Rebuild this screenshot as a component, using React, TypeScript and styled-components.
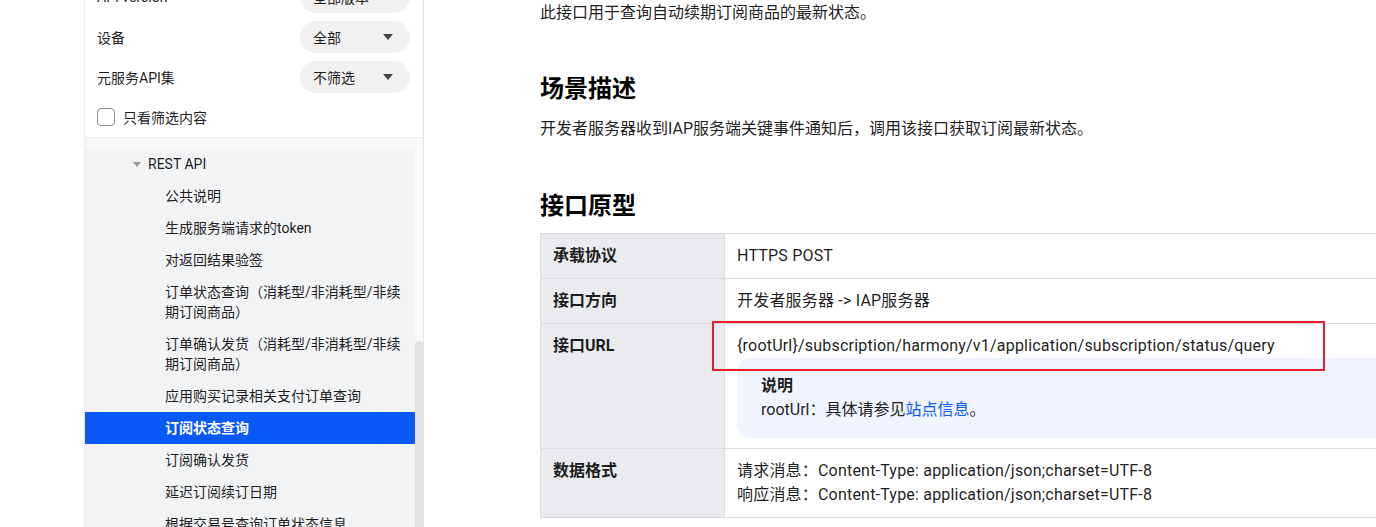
import React, { FC } from "react";
import styled, { createGlobalStyle } from "styled-components";

const GlobalStyle = createGlobalStyle`
  html, body {
    margin: 0;
    padding: 0;
    background: #fff;
    overflow: hidden;
  }
  body {
    font-family: Roboto, "Noto Sans CJK SC", sans-serif;
    color: rgba(0, 0, 0, 0.9);
  }
`;

const filters = [
  { label: "API version", value: "全部版本" },
  { label: "设备", value: "全部" },
  { label: "元服务API集", value: "不筛选" },
];

type NavItem = { text: string; active?: boolean };

const navItems: NavItem[] = [
  { text: "公共说明" },
  { text: "生成服务端请求的token" },
  { text: "对返回结果验签" },
  { text: "订单状态查询（消耗型/非消耗型/非续期订阅商品）" },
  { text: "订单确认发货（消耗型/非消耗型/非续期订阅商品）" },
  { text: "应用购买记录相关支付订单查询" },
  { text: "订阅状态查询", active: true },
  { text: "订阅确认发货" },
  { text: "延迟订阅续订日期" },
  { text: "根据交易号查询订单状态信息" },
];

const Page = styled.div`
  display: flex;
  height: 527px;
  overflow: hidden;
`;

const Gutter = styled.div`
  width: 84px;
  flex-shrink: 0;
  border-right: 1px solid #ececec;
`;

const Sidebar = styled.aside`
  width: 338px;
  flex-shrink: 0;
  display: flex;
  flex-direction: column;
  border-right: 1px solid #e4e4e4;
  font-size: 14px;
`;

const FilterBox = styled.div`
  flex-shrink: 0;
  margin-top: -23px;
  padding: 0 13px 0 12px;
  border-bottom: 1px solid #ececec;
`;

const FilterRow = styled.div`
  height: 40px;
  display: flex;
  align-items: center;
  justify-content: space-between;
`;

const Pill = styled.div`
  width: 110px;
  height: 32px;
  box-sizing: border-box;
  border-radius: 16px;
  background: #f1f1f1;
  display: flex;
  align-items: center;
  justify-content: space-between;
  padding: 0 17px 0 13px;
`;

const Caret = styled.span`
  width: 0;
  height: 0;
  border-left: 5px solid transparent;
  border-right: 5px solid transparent;
  border-top: 6px solid #444;
`;

const CheckRow = styled.label`
  height: 40px;
  display: flex;
  align-items: center;
  gap: 8px;
`;

const CheckBox = styled.span`
  width: 18px;
  height: 18px;
  box-sizing: border-box;
  border: 1px solid #8c8c8c;
  border-radius: 4px;
`;

const NavArea = styled.div`
  flex: 1;
  display: flex;
  min-height: 0;
`;

const NavScroll = styled.div`
  width: 330px;
  display: flex;
  flex-direction: column;
  background: #f1f3f5;
  overflow: hidden;

  & > * {
    flex-shrink: 0;
  }
`;

const NavTop = styled.div`
  height: 10px;
  background: #f7f8fa;
`;

const Track = styled.div`
  width: 8px;
  background: #f7f8fa;
  padding-top: 203px;
  box-sizing: border-box;
`;

const Thumb = styled.div`
  height: 100%;
  background: #e3e3e3;
  border-radius: 4px 4px 0 0;
`;

const GroupRow = styled.div`
  height: 32px;
  display: flex;
  align-items: center;
  padding-left: 48px;
  gap: 7px;
`;

const GroupCaret = styled.span`
  width: 0;
  height: 0;
  border-left: 4px solid transparent;
  border-right: 4px solid transparent;
  border-top: 5px solid #9a9a9a;
`;

const NavLink = styled.div<{ $active?: boolean }>`
  padding: 6px 14px 6px 80px;
  line-height: 20px;
  background: ${({ $active }) => ($active ? "#0a59f7" : "transparent")};
  color: ${({ $active }) => ($active ? "#fff" : "rgba(0,0,0,0.9)")};
  font-weight: ${({ $active }) => ($active ? 600 : 400)};
`;

const Main = styled.main`
  flex: 1;
  padding-left: 116px;
  min-width: 0;
  overflow: hidden;
  font-size: 16px;
  line-height: 24px;
`;

const Para = styled.p<{ $top: number }>`
  margin: ${({ $top }) => $top}px 0 0;
  white-space: nowrap;
`;

const Heading = styled.h2<{ $top: number }>`
  margin: ${({ $top }) => $top}px 0 0;
  font-size: 24px;
  line-height: 32px;
  font-weight: 700;
  color: #000;
`;

const Table = styled.table`
  margin-top: 11px;
  width: 900px;
  border-collapse: collapse;
  table-layout: fixed;
`;

const HeadCell = styled.th`
  width: 159px;
  background: #e9ebee;
  text-align: left;
  vertical-align: top;
  font-weight: 700;
  padding: 10px 12px;
  border: 1px solid #dcdcdc;
`;

const Cell = styled.td`
  position: relative;
  vertical-align: top;
  padding: 10px 12px;
  border: 1px solid #dcdcdc;
  white-space: nowrap;
  letter-spacing: 0.2px;
`;

const Note = styled.div`
  background: #eff4fe;
  border-radius: 14px;
  padding: 16px 24px;
  letter-spacing: 0;
`;

const NoteTitle = styled.div`
  font-weight: 700;
`;

const Link = styled.span`
  color: #0a59f7;
`;

const Mark = styled.div`
  position: absolute;
  left: -13px;
  top: -3px;
  width: 613px;
  height: 50px;
  box-sizing: border-box;
  border: 2px solid #e3202b;
  pointer-events: none;
`;

const App: FC = () => {
  return (
    <Page>
      <GlobalStyle />
      <Gutter />
      <Sidebar>
        <FilterBox>
          {filters.map((f) => (
            <FilterRow key={f.label}>
              <span>{f.label}</span>
              <Pill>
                <span>{f.value}</span>
                <Caret />
              </Pill>
            </FilterRow>
          ))}
          <CheckRow>
            <CheckBox />
            <span>只看筛选内容</span>
          </CheckRow>
        </FilterBox>
        <NavArea>
          <NavScroll>
            <NavTop />
            <GroupRow>
              <GroupCaret />
              <span>REST API</span>
            </GroupRow>
            {navItems.map((item) => (
              <NavLink key={item.text} $active={item.active}>
                {item.text}
              </NavLink>
            ))}
          </NavScroll>
          <Track>
            <Thumb />
          </Track>
        </NavArea>
      </Sidebar>
      <Main>
        <Para $top={1}>此接口用于查询自动续期订阅商品的最新状态。</Para>
        <Heading $top={48}>场景描述</Heading>
        <Para $top={12}>
          开发者服务器收到IAP服务端关键事件通知后，调用该接口获取订阅最新状态。
        </Para>
        <Heading $top={49}>接口原型</Heading>
        <Table>
          <tbody>
            <tr>
              <HeadCell>承载协议</HeadCell>
              <Cell>HTTPS POST</Cell>
            </tr>
            <tr>
              <HeadCell>接口方向</HeadCell>
              <Cell>开发者服务器 -&gt; IAP服务器</Cell>
            </tr>
            <tr>
              <HeadCell>接口URL</HeadCell>
              <Cell>
                <Mark />
                {"{rootUrl}/subscription/harmony/v1/application/subscription/status/query"}
                <Note>
                  <NoteTitle>说明</NoteTitle>
                  rootUrl：具体请参见<Link>站点信息</Link>。
                </Note>
              </Cell>
            </tr>
            <tr>
              <HeadCell>数据格式</HeadCell>
              <Cell>
                请求消息：Content-Type: application/json;charset=UTF-8
                <br />
                响应消息：Content-Type: application/json;charset=UTF-8
              </Cell>
            </tr>
          </tbody>
        </Table>
      </Main>
    </Page>
  );
};

export default App;
